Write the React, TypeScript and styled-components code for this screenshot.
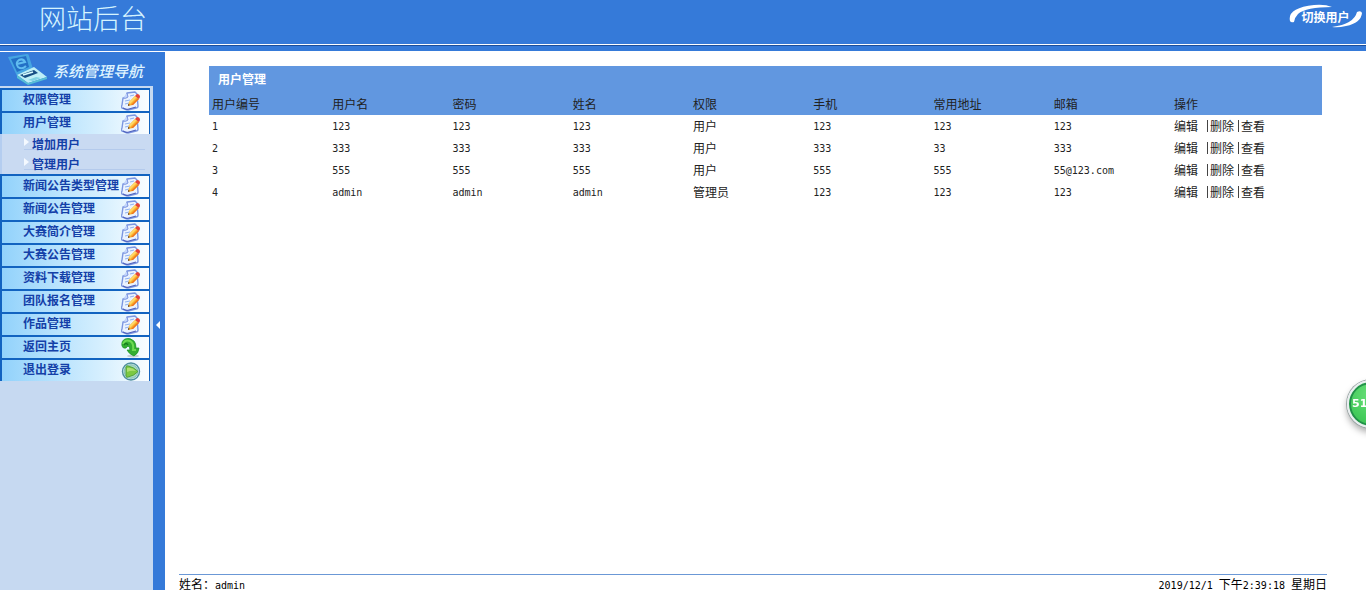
import React from "react";
import styled, { createGlobalStyle, css } from "styled-components";

const Global = createGlobalStyle`
  *, *::before, *::after { box-sizing: border-box; }
  body {
    margin: 0;
    background: #fff;
    color: #222;
    font-family: "Noto Sans CJK SC", sans-serif;
    font-size: 12px;
    line-height: 16px;
  }
`;

const blue = "#357ad9";
const mono = `"DejaVu Sans Mono", "Noto Sans CJK SC", monospace`;

const Page = styled.div`
  min-height: 100vh;
  display: flex;
  flex-direction: column;
`;

const Header = styled.header`
  height: 51px;
  flex: none;
  display: flex;
  flex-direction: column;
  background: ${blue};
`;

const HeaderRow = styled.div`
  height: 46px;
  display: flex;
  justify-content: space-between;
  align-items: flex-start;
  padding: 1px 4px 0 39px;
  border-bottom: 1px solid #1c4f9c;
  box-shadow: inset 0 -1px 0 #fff;
`;

const SiteTitle = styled.h1`
  margin: 0;
  color: #d6f4ff;
  font-size: 27px;
  line-height: 34px;
  font-weight: 300;
`;

const SwitchButton = styled.button`
  display: grid;
  place-items: center;
  width: 73px;
  height: 26px;
  margin-top: 3px;
  padding: 0;
  border: 0;
  background: none;
  color: #fff;
  font: bold 12px/16px "Noto Sans CJK SC", sans-serif;
  cursor: pointer;
  > * { grid-area: 1 / 1; }
`;

const Body = styled.div`
  flex: 1;
  display: flex;
  padding-top: 1px;
`;

const Sidebar = styled.aside`
  width: 153px;
  flex: none;
  background: #c6d9f1;
`;

const NavTitle = styled.h2`
  display: flex;
  align-items: center;
  gap: 5px;
  height: 34px;
  margin: 0;
  padding-left: 8px;
  background: ${blue};
  color: #dff4ff;
  font-size: 15px;
  line-height: 20px;
  font-weight: 500;
  font-style: italic;
  white-space: nowrap;
  span { padding-top: 4px; }
`;

const Menu = styled.ul`
  list-style: none;
  margin: 0;
  padding: 2px 3px 0 0;
`;

const linkText = css`
  color: #1440a8;
  font-weight: bold;
  text-decoration: none;
  white-space: nowrap;
`;

const MenuLink = styled.a`
  ${linkText}
  display: flex;
  justify-content: space-between;
  height: 23px;
  padding: 1px 8px 0 21px;
  border: solid #1263c0;
  border-width: 2px 1px 0 2px;
  background: linear-gradient(90deg, #92d2fb 0%, #b6e2fd 35%, #d3eefe 65%, #fafdff 100%);
  svg { flex: none; margin-left: -16px; }
`;

const SubMenu = styled.ul`
  list-style: none;
  margin: 0;
  padding: 0 5px 0 0;
  background: #c9daf2;
  border-left: 2px solid #b4cdf0;
`;

const SubLink = styled.a`
  ${linkText}
  display: flex;
  align-items: flex-start;
  gap: 3px;
  height: 20px;
  padding: 2px 0 0 22px;
  background: linear-gradient(#b4caec, #b4caec) 22px 15px / 100% 1px no-repeat;
  &::before {
    content: "";
    margin-top: 2px;
    border: solid transparent;
    border-width: 4px 0 4px 5px;
    border-left-color: #f4f9ff;
  }
`;

const Splitter = styled.button`
  width: 12px;
  flex: none;
  display: flex;
  align-items: center;
  justify-content: flex-start;
  padding: 8px 0 0 3px;
  border: 0;
  background: ${blue};
  cursor: pointer;
  &::before {
    content: "";
    border: solid transparent;
    border-width: 4px 4px 4px 0;
    border-right-color: #fff;
  }
`;

const Content = styled.main`
  flex: 1;
  min-width: 0;
  display: flex;
  flex-direction: column;
  padding: 14px 39px 0 14px;
`;

const Panel = styled.section`
  flex: 1;
  padding: 0 5px 0 30px;
`;

const PanelTitle = styled.h3`
  margin: 0;
  height: 27px;
  padding: 5px 9px 0;
  background: #6197e0;
  color: #fff;
  font-size: 12px;
  line-height: 16px;
`;

const Table = styled.table`
  width: 100%;
  border-collapse: collapse;
  table-layout: fixed;
  th, td {
    height: 22px;
    padding: 0 0 0 3px;
    text-align: left;
    font-weight: normal;
    white-space: nowrap;
  }
  th { background: #6197e0; }
  th:last-child { width: 151px; }
`;

const Latin = styled.span`
  font: 10px/16px ${mono};
`;

const Actions = styled.span`
  display: flex;
  align-items: center;
`;

const ActionLink = styled.a<{ $divided?: boolean }>`
  color: inherit;
  text-decoration: none;
  line-height: 12px;
  ${(p) =>
    p.$divided
      ? "border-left: 1px solid #444; padding-left: 2px; margin-right: 4px;"
      : "margin-right: 9px;"}
`;

const Footer = styled.footer`
  display: flex;
  justify-content: space-between;
  height: 16px;
  padding-top: 1px;
  border-top: 1px solid #6b98d6;
  color: #000;
  line-height: 16px;
  white-space: nowrap;
`;

const Badge = styled.div`
  position: fixed;
  top: 380px;
  right: -29px;
  width: 48px;
  height: 48px;
  border: 2px solid #e9eef0;
  border-radius: 50%;
  padding-left: 3px;
  background: radial-gradient(circle at 50% 30%, #6be07a, #45cc5c 60%, #38b950);
  box-shadow: inset 0 0 0 2px #23904a, 0 0 0 1px #9aa5a5, 0 4px 7px rgba(0, 0, 0, 0.35);
  color: #fff;
  font: bold 11px/44px "DejaVu Sans", sans-serif;
`;

const NoteIcon = () => (
  <svg width="20" height="20" viewBox="0 0 20 20" aria-hidden="true">
    <path d="M6 2L14 1L16 3L17 15Q17 17 15 17L7 19Q5 19 4 18L1 17Q0 16 1 14L2 7L5 6Z" fill="#eaf2ff" stroke="#7c96e0" strokeWidth="1.4" strokeLinejoin="round" />
    <path d="M6 2L7 6Q5 8 2 7" fill="#c4d6fb" stroke="#7c96e0" />
    <path d="M2 17Q5 19 8 18L15 16" fill="none" stroke="#4f62bd" strokeWidth="1.2" />
    <path d="M4 10L9 9M4 13L8 12M9 5L13 4" stroke="#8fb2ee" />
    <path d="M7 15L8 11L14 5L18 8L12 14Z" fill="#fbb02c" />
    <path d="M8 11L14 5L16 6L9 13Z" fill="#ffd768" />
    <path d="M12 14L18 8L17 7L10 14Z" fill="#ee7420" />
    <path d="M14 5L16 3Q19 3 19 6L18 8Z" fill="#e5423a" />
    <path d="M7 15L7 13L9 14Z" fill="#604028" />
  </svg>
);

const ReturnIcon = () => (
  <svg width="20" height="20" viewBox="0 0 20 20" aria-hidden="true">
    <ellipse cx="12" cy="18" rx="6" ry="1.5" fill="#c4cfd2" />
    <path d="M1 8Q0 3 4 1Q9 -1 13 3Q15 5 15 10L18 10Q18 15 13 18Q8 16 6 12L9 12Q9 9 7 8L5 10Q2 11 1 8Z" fill="#33ae32" stroke="#1c9428" strokeWidth=".7" />
    <path d="M2 6Q4 1 9 3Q13 5 12 12L15 12" fill="none" stroke="#6cdb51" strokeWidth="2" />
    <path d="M3 7Q5 4 7 7" fill="none" stroke="#157c1e" strokeWidth="1.4" />
  </svg>
);

const PlayIcon = () => (
  <svg width="20" height="20" viewBox="0 0 20 20" aria-hidden="true">
    <circle cx="10" cy="10.5" r="8.5" fill="#d6efef" stroke="#4f8fa0" strokeWidth="1.4" />
    <circle cx="10" cy="10.5" r="6.8" fill="#a6d8c0" stroke="#77b6ad" strokeWidth=".8" />
    <path d="M5 6Q5 4 7 5Q13 6 17 10.5Q13 15 7 16Q5 17 5 15Z" fill="#7cc842" stroke="#4a9b36" strokeWidth=".8" />
    <path d="M6 7Q11 6 15 10Q10 9 6 11Z" fill="#aee070" />
  </svg>
);

const LaptopIcon = () => (
  <svg width="40" height="32" viewBox="0 0 40 32" aria-hidden="true">
    <path d="M0 4L19 1Q21 1 21 3L25 16L9 23Z" fill="#45a5e2" />
    <path d="M3 6L18 3L21 14L9 19Z" fill="#2370c6" />
    <path d="M9 11L17 9Q15 5 11 7Q7 10 10 14Q14 17 18 13" fill="none" stroke="#62bdf0" strokeWidth="2" />
    <path d="M9 22L26 14L39 24L20 30Z" fill="#bdeff7" />
    <path d="M9 22L20 30L39 24V26L20 32L9 25Z" fill="#57bfd5" />
    <path d="M12 22L26 17L30 20L17 25Z" fill="#174f85" />
    <path d="M15 22L25 19" stroke="#d8fbff" strokeWidth="1.6" />
    <path d="M20 27L28 24L33 25L25 28Z" fill="#7fd3e4" />
  </svg>
);

const Swoosh = () => (
  <svg width="73" height="26" viewBox="0 0 73 26" aria-hidden="true">
    <path d="M1 17Q-2 4 25 1Q36 0 43 3Q17 3 9 10Q6 13 5 18Q2 19 1 17Z" fill="#fff" />
    <path d="M68 8Q72 6 73 9Q72 19 57 22Q49 24 43 23Q65 20 68 8Z" fill="#fff" />
  </svg>
);

const menu = [
  { label: "权限管理", Icon: NoteIcon },
  { label: "用户管理", Icon: NoteIcon, children: ["增加用户", "管理用户"] },
  { label: "新闻公告类型管理", Icon: NoteIcon },
  { label: "新闻公告管理", Icon: NoteIcon },
  { label: "大赛简介管理", Icon: NoteIcon },
  { label: "大赛公告管理", Icon: NoteIcon },
  { label: "资料下载管理", Icon: NoteIcon },
  { label: "团队报名管理", Icon: NoteIcon },
  { label: "作品管理", Icon: NoteIcon },
  { label: "返回主页", Icon: ReturnIcon },
  { label: "退出登录", Icon: PlayIcon },
];

const columns = ["用户编号", "用户名", "密码", "姓名", "权限", "手机", "常用地址", "邮箱", "操作"];

const users = [
  ["1", "123", "123", "123", "用户", "123", "123", "123"],
  ["2", "333", "333", "333", "用户", "333", "33", "333"],
  ["3", "555", "555", "555", "用户", "555", "555", "55@123.com"],
  ["4", "admin", "admin", "admin", "管理员", "123", "123", "123"],
];

const isLatin = (text: string) => /^[\x20-\x7e]+$/.test(text);

export default function App() {
  return (
    <Page>
      <Global />
      <Header>
        <HeaderRow>
          <SiteTitle>网站后台</SiteTitle>
          <SwitchButton type="button">
            <Swoosh />
            <span>切换用户</span>
          </SwitchButton>
        </HeaderRow>
      </Header>
      <Body>
        <Sidebar>
          <NavTitle>
            <LaptopIcon />
            <span>系统管理导航</span>
          </NavTitle>
          <nav>
            <Menu>
              {menu.map(({ label, Icon, children }) => (
                <li key={label}>
                  <MenuLink href="#">
                    {label}
                    <Icon />
                  </MenuLink>
                  {children && (
                    <SubMenu>
                      {children.map((child) => (
                        <li key={child}>
                          <SubLink href="#">{child}</SubLink>
                        </li>
                      ))}
                    </SubMenu>
                  )}
                </li>
              ))}
            </Menu>
          </nav>
        </Sidebar>
        <Splitter type="button" aria-label="收起" />
        <Content>
          <Panel>
            <PanelTitle>用户管理</PanelTitle>
            <Table>
              <thead>
                <tr>
                  {columns.map((c) => (
                    <th key={c} scope="col">{c}</th>
                  ))}
                </tr>
              </thead>
              <tbody>
                {users.map((row) => (
                  <tr key={row[0]}>
                    {row.map((value, i) => (
                      <td key={i}>{isLatin(value) ? <Latin>{value}</Latin> : value}</td>
                    ))}
                    <td>
                      <Actions>
                        <ActionLink href="#">编辑</ActionLink>
                        <ActionLink href="#" $divided>删除</ActionLink>
                        <ActionLink href="#" $divided>查看</ActionLink>
                      </Actions>
                    </td>
                  </tr>
                ))}
              </tbody>
            </Table>
          </Panel>
          <Footer>
            <span>姓名：<Latin>admin</Latin></span>
            <span>
              <Latin>2019/12/1 </Latin>下午<Latin>2:39:18 </Latin>星期日
            </span>
          </Footer>
        </Content>
      </Body>
      <Badge>51</Badge>
    </Page>
  );
}
